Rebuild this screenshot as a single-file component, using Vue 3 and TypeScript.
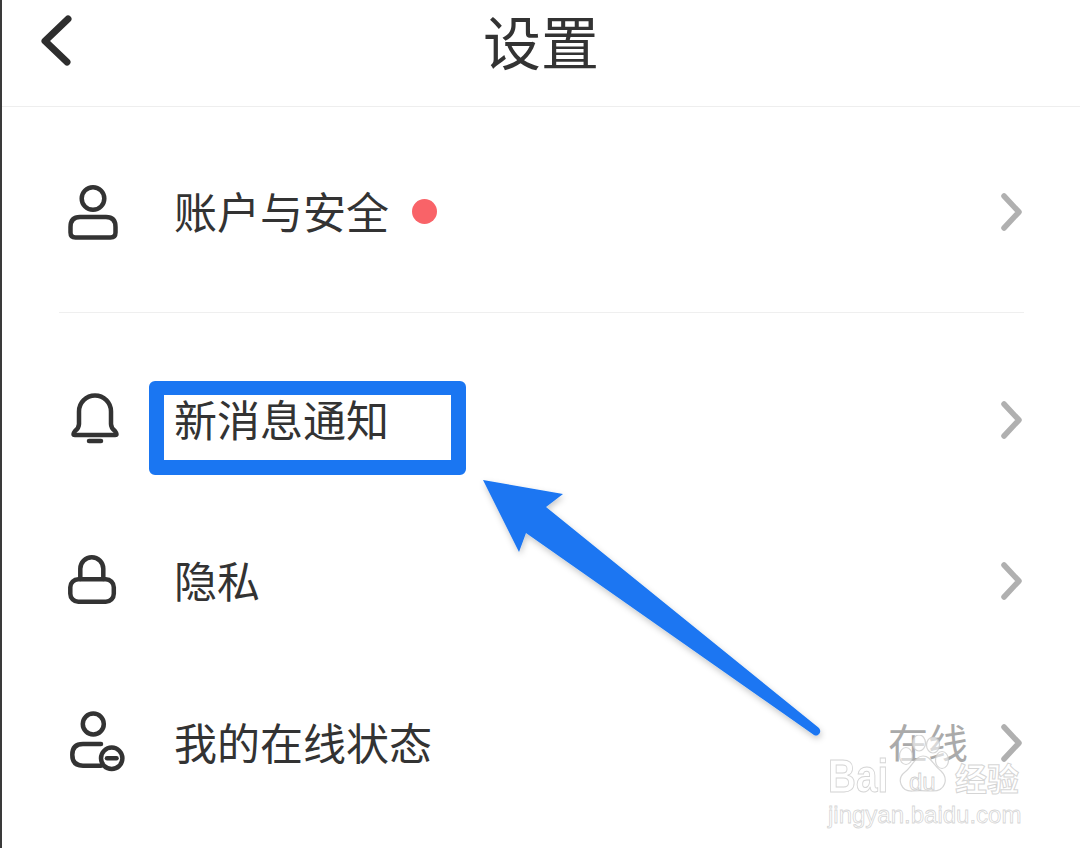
<script setup lang="ts">
interface Row {
  id: string
  label: string
  dot?: boolean
  value?: string
}

const firstRow: Row = { id: 'account', label: '账户与安全', dot: true }
const rows: Row[] = [
  { id: 'notify', label: '新消息通知' },
  { id: 'privacy', label: '隐私' },
  { id: 'status', label: '我的在线状态', value: '在线' },
]
const allRows = [firstRow, ...rows]
</script>

<template>
  <div class="page">
    <header class="top-bar">
      <svg class="back" width="40" height="64" viewBox="0 0 40 64">
        <path d="M30 7 L7 29 L29 50" />
      </svg>
      <h1 class="title">设置</h1>
    </header>

    <section class="list">
      <template v-for="(row, i) in allRows" :key="row.id">
        <div class="row">
          <svg class="icon" width="60" height="60" viewBox="0 0 60 60">
            <template v-if="row.id === 'account'">
              <circle cx="28" cy="16.500" r="11.300" />
              <path d="M15 35 H41 Q50.500 35 50.500 45 V50.500 Q50.500 55.500 45.500 55.500 H10.500 Q5.500 55.500 5.500 50.500 V45 Q5.500 35 15 35 Z" />
            </template>
            <template v-else-if="row.id === 'notify'">
              <path d="M14 34 V21.500 A16 16 0 0 1 46 21.500 V34 Q46 38 50 41 Q53 45 50 45 H10 Q7 45 10 41 Q14 38 14 34 Z" />
              <path d="M24 51 H36" />
            </template>
            <template v-else-if="row.id === 'privacy'">
              <path d="M15.300 28 V17.800 A11.500 11.500 0 0 1 38.300 17.800 V28" />
              <rect x="5.300" y="28.300" width="43.500" height="22.500" rx="8" />
            </template>
            <template v-else>
              <circle cx="28.300" cy="11" r="10.500" />
              <path d="M36 31 H18 Q7.300 31 7.300 41.800 Q7.300 52.700 18 52.700 H36" />
              <circle cx="46.700" cy="45.300" r="10.700" />
              <path d="M42 45.300 H51.500" />
            </template>
          </svg>
          <span class="label">{{ row.label }}</span>
          <span v-if="row.dot" class="dot"></span>
          <span class="spacer"></span>
          <span v-if="row.value" class="value">{{ row.value }}</span>
          <svg class="chevron" width="26" height="40" viewBox="0 0 26 40">
            <path d="M6 4 L21 20 L6 36" />
          </svg>
        </div>
        <div v-if="i === 0" class="divider"></div>
      </template>
    </section>

    <!-- annotations drawn over the screenshot -->
    <div class="highlight"></div>
    <svg class="arrow" width="1080" height="848" viewBox="0 0 1080 848">
      <defs>
        <filter id="arrow-shadow" x="-10%" y="-10%" width="120%" height="120%">
          <feDropShadow dx="1" dy="3" stdDeviation="3" flood-color="#000" flood-opacity="0.22" />
        </filter>
      </defs>
      <path
        d="M483 480 L563 494 L546 507 L819 728 Q822 732 818 735 Q816 736 814 735 L526 533 L519 552 Z"
        fill="#1a76f2"
        filter="url(#arrow-shadow)"
      />
    </svg>

    <div class="watermark">
      <div class="wm-top">
        <span class="wm-brand">Bai</span>
        <svg class="wm-paw" width="56" height="60" viewBox="0 0 56 60">
          <ellipse cx="11" cy="21" rx="6.500" ry="8.500" />
          <ellipse cx="24" cy="8" rx="6.500" ry="8" />
          <ellipse cx="38" cy="10" rx="6.500" ry="8" />
          <ellipse cx="47" cy="25" rx="6.500" ry="8.500" />
          <path d="M28 21 C36 21 38 30 46 36 C54 44 50 56 38 56 C32 56 24 55 18 56 C6 57 1 44 10 37 C17 32 20 21 28 21 Z" />
        </svg>
        <span class="wm-du">du</span>
        <span class="wm-cn">经验</span>
      </div>
      <div class="wm-url">jingyan.baidu.com</div>
    </div>
  </div>
</template>

<style scoped>
.page {
  position: relative;
  width: 1080px;
  height: 848px;
  overflow: hidden;
  box-sizing: border-box;
  background: #fff;
  border-left: 2px solid #3a3a3a;
  color: #333;
  font-family: "Noto Sans CJK SC", "Noto Sans", sans-serif;
}

.top-bar {
  position: relative;
  height: 106px;
  display: flex;
  align-items: center;
  justify-content: center;
  border-bottom: 1px solid #eeeeee;
}

.back {
  position: absolute;
  left: 36px;
  top: 12px;
}

.back path {
  fill: none;
  stroke: #2e2e2e;
  stroke-width: 7;
  stroke-linecap: round;
  stroke-linejoin: round;
}

.title {
  margin: 0 0 26px 0;
  font-size: 58px;
  font-weight: 400;
  line-height: 64px;
}

.list {
  padding: 24px 56px 0 57px;
}

.row {
  height: 162px;
  display: flex;
  align-items: center;
}

.row:nth-child(3) {
  height: 161px;
}

.icon {
  flex: none;
  width: 60px;
  height: 60px;
  margin: 0 49px 0 6px;
  overflow: visible;
}

.icon circle,
.icon path,
.icon rect {
  fill: none;
  stroke: #333;
  stroke-width: 4.5;
  stroke-linecap: round;
  stroke-linejoin: round;
}

.label {
  margin-bottom: 4px;
  font-size: 43px;
  line-height: 60px;
  color: #333;
}

.dot {
  width: 25px;
  height: 25px;
  margin: -2px 0 0 23px;
  border-radius: 50%;
  background: #f96368;
}

.spacer {
  flex: 1;
}

.value {
  margin: 0 30px 4px 0;
  font-size: 40px;
  line-height: 60px;
  color: #aaaaaa;
}

.chevron {
  flex: none;
}

.chevron path {
  fill: none;
  stroke: #b0b0b0;
  stroke-width: 5.5;
  stroke-linecap: round;
  stroke-linejoin: round;
}

.divider {
  height: 1px;
  margin: 19px 0 26px;
  background: #efefef;
}

.highlight {
  position: absolute;
  left: 147px;
  top: 381px;
  width: 317px;
  height: 94px;
  box-sizing: border-box;
  border: solid #1a76f2;
  border-width: 14px 15px 15px;
  border-radius: 6px;
}

.arrow {
  position: absolute;
  left: -2px;
  top: 0;
}

.watermark {
  position: absolute;
  left: 826px;
  top: 752px;
  width: 200px;
  color: rgba(255, 255, 255, 0.55);
  font-family: "Liberation Sans", Arial, sans-serif;
}

.wm-top {
  position: relative;
  height: 48px;
  display: flex;
  align-items: center;
}

.wm-brand {
  display: inline-block;
  font-size: 46px;
  font-weight: 700;
  line-height: 48px;
  transform: scaleX(0.84);
  transform-origin: left center;
  -webkit-text-stroke: 1px rgba(195, 195, 195, 0.7);
}

.wm-paw {
  position: absolute;
  left: 67px;
  top: -17px;
}

.wm-paw ellipse,
.wm-paw path {
  fill: rgba(255, 255, 255, 0.55);
  stroke: rgba(200, 200, 200, 0.75);
  stroke-width: 1.2;
}

.wm-du {
  position: absolute;
  left: 81px;
  top: 17px;
  font-size: 24px;
  line-height: 26px;
  color: transparent;
  -webkit-text-stroke: 0.8px rgba(195, 195, 195, 0.8);
}

.wm-cn {
  position: absolute;
  left: 127px;
  top: 3px;
  font-family: "Noto Sans CJK SC", sans-serif;
  font-size: 32px;
  font-weight: 700;
  line-height: 44px;
  -webkit-text-stroke: 1px rgba(195, 195, 195, 0.7);
}

.wm-url {
  margin-top: 2px;
  font-size: 24px;
  line-height: 26px;
  white-space: nowrap;
  color: rgba(255, 255, 255, 0.55);
  -webkit-text-stroke: 0.8px rgba(195, 195, 195, 0.7);
}
</style>
